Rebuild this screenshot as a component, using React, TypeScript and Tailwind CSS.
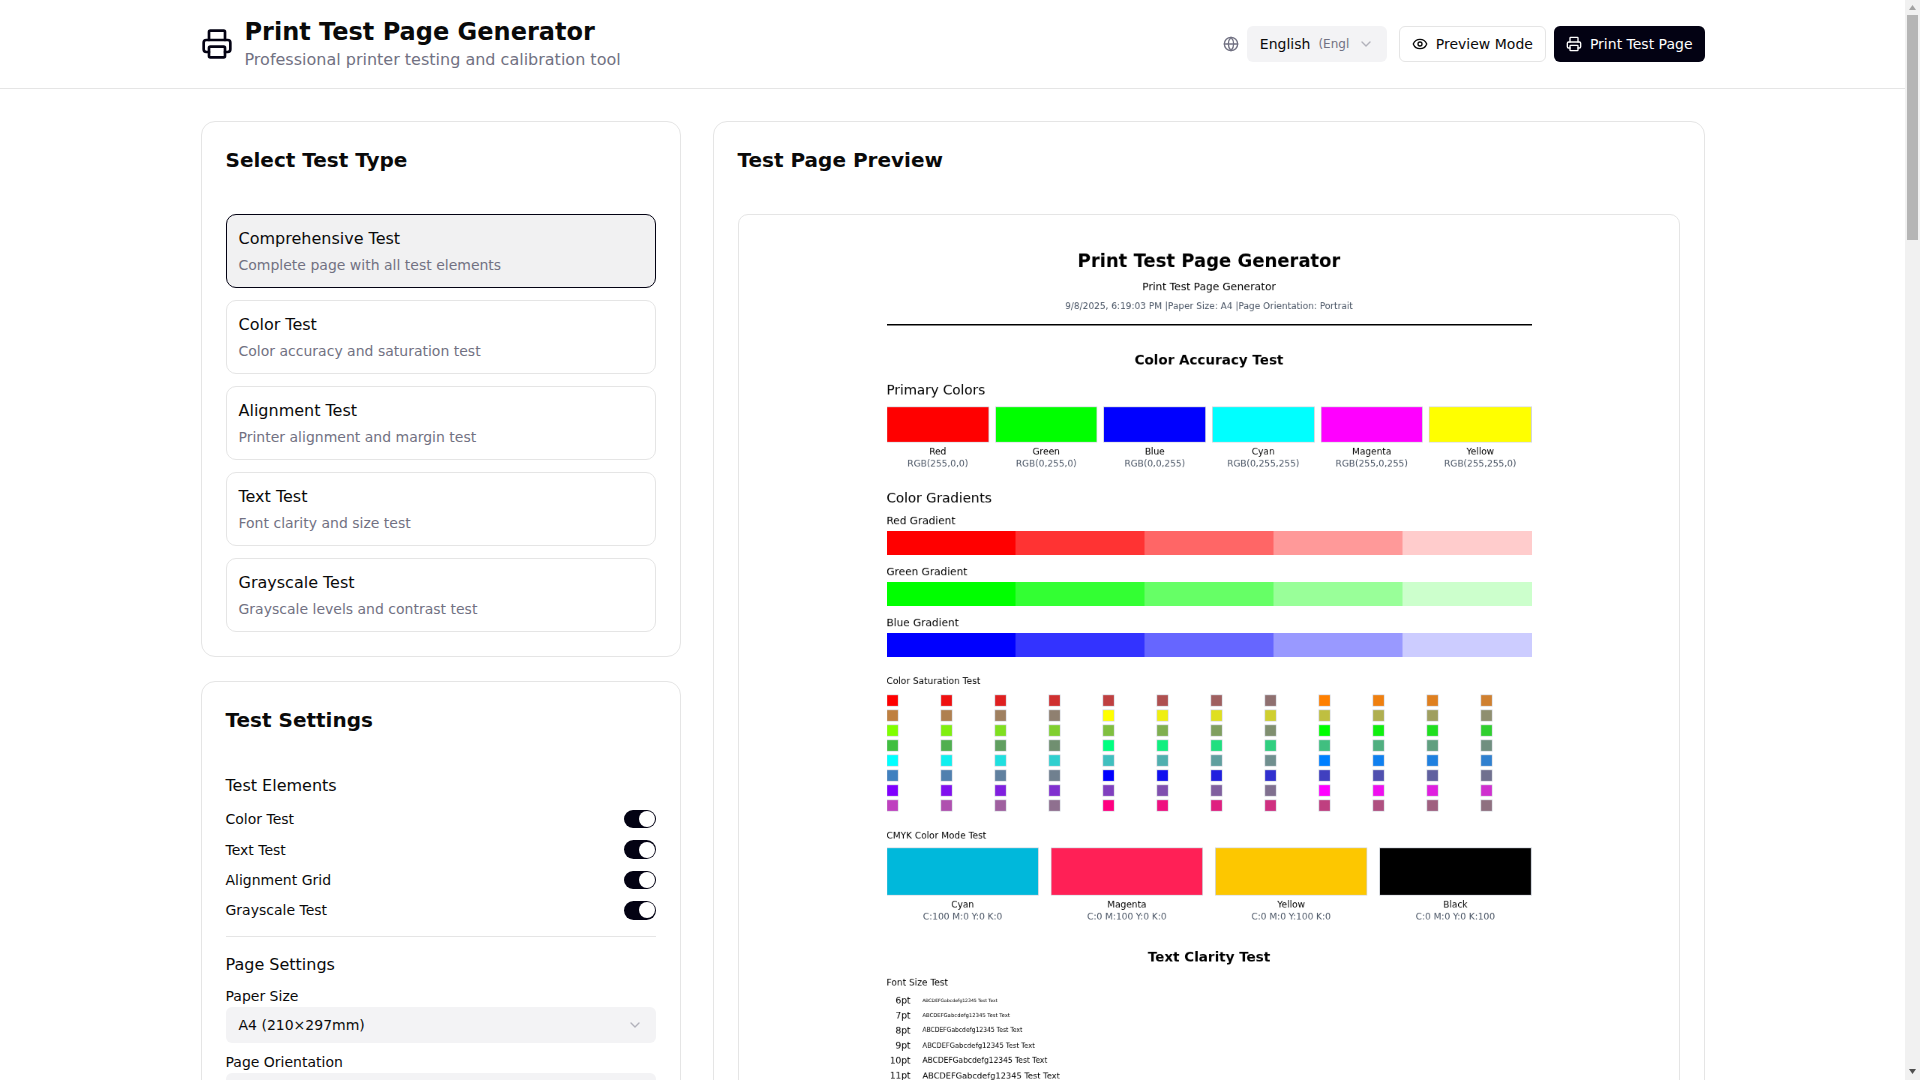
import { ChevronDown, Eye, Globe, Printer } from 'lucide-react';

const testTypes = [
  { name: 'Comprehensive Test', desc: 'Complete page with all test elements', active: true },
  { name: 'Color Test', desc: 'Color accuracy and saturation test' },
  { name: 'Alignment Test', desc: 'Printer alignment and margin test' },
  { name: 'Text Test', desc: 'Font clarity and size test' },
  { name: 'Grayscale Test', desc: 'Grayscale levels and contrast test' },
];

const primaries = [
  { name: 'Red', rgb: 'RGB(255,0,0)', cls: 'bg-[#ff0000]' },
  { name: 'Green', rgb: 'RGB(0,255,0)', cls: 'bg-[#00ff00]' },
  { name: 'Blue', rgb: 'RGB(0,0,255)', cls: 'bg-[#0000ff]' },
  { name: 'Cyan', rgb: 'RGB(0,255,255)', cls: 'bg-[#00ffff]' },
  { name: 'Magenta', rgb: 'RGB(255,0,255)', cls: 'bg-[#ff00ff]' },
  { name: 'Yellow', rgb: 'RGB(255,255,0)', cls: 'bg-[#ffff00]' },
];

const gradients = [
  { name: 'Red Gradient', cells: ['#ff0000', '#ff3333', '#ff6666', '#ff9999', '#ffcccc'] },
  { name: 'Green Gradient', cells: ['#00ff00', '#33ff33', '#66ff66', '#99ff99', '#ccffcc'] },
  { name: 'Blue Gradient', cells: ['#0000ff', '#3333ff', '#6666ff', '#9999ff', '#ccccff'] },
];

const cmyk = [
  { name: 'Cyan', values: 'C:100 M:0 Y:0 K:0', cls: 'bg-cyan-500' },
  { name: 'Magenta', values: 'C:0 M:100 Y:0 K:0', cls: 'bg-rose-500' },
  { name: 'Yellow', values: 'C:0 M:0 Y:100 K:0', cls: 'bg-yellow-400' },
  { name: 'Black', values: 'C:0 M:0 Y:0 K:100', cls: 'bg-black' },
];

const fontSizes = [
  { label: '6pt', cls: 'text-[6px]' },
  { label: '7pt', cls: 'text-[7px]' },
  { label: '8pt', cls: 'text-[8px]' },
  { label: '9pt', cls: 'text-[9px]' },
  { label: '10pt', cls: 'text-[10px]' },
  { label: '11pt', cls: 'text-[11px]' },
  { label: '12pt', cls: 'text-[12px]' },
  { label: '14pt', cls: 'text-[14px]' },
];

const hues = [0, 30, 60, 90, 120, 150, 180, 210, 240, 270, 300, 330];
const sats = [100, 87.5, 75, 62.5, 50, 37.5, 25, 12.5];

const Switch = () => (
  <span className="flex h-[18.4px] w-8 shrink-0 items-center rounded-full border border-transparent bg-[#030213]">
    <span className="ml-[14px] block h-4 w-4 rounded-full bg-white" />
  </span>
);

const Toggle = ({ label }: { label: string }) => (
  <div className="flex items-center justify-between">
    <span className="text-sm leading-none">{label}</span>
    <Switch />
  </div>
);

const SelectBox = ({ value }: { value: string }) => (
  <div className="mt-1 flex h-9 items-center justify-between rounded-md bg-[#f3f3f5] px-[13px] text-sm">
    <span>{value}</span>
    <ChevronDown className="h-4 w-4 text-[#717182] opacity-50" />
  </div>
);

const TestPage = () => (
  <div className="w-[860px] shrink-0 origin-top scale-[0.75] text-black will-change-transform">
    <div className="border-b-2 border-black pb-4 text-center">
      <h1 className="mb-2 text-2xl font-bold">Print Test Page Generator</h1>
      <p className="mb-2 text-sm">Print Test Page Generator</p>
      <p className="text-xs text-gray-600">9/8/2025, 6:19:03 PM |Paper Size: A4 |Page Orientation: Portrait</p>
    </div>

    <h2 className="mt-8 mb-3 text-center text-lg font-bold">Color Accuracy Test</h2>
    <h3 className="mb-2 text-lg">Primary Colors</h3>
    <div className="grid grid-cols-6 gap-2">
      {primaries.map((c) => (
        <div key={c.name} className="text-center">
          <div className={`h-12 border border-gray-300 ${c.cls}`} />
          <p className="mt-1 text-xs">{c.name}</p>
          <p className="text-xs text-gray-600">{c.rgb}</p>
        </div>
      ))}
    </div>

    <h3 className="mt-6 mb-1.5 text-lg">Color Gradients</h3>
    {gradients.map((g) => (
      <div key={g.name} className="mb-3">
        <p className="mb-1 text-sm">{g.name}</p>
        <div className="flex h-8">
          {g.cells.map((cell) => (
            <div key={cell} className="flex-1" style={{ backgroundColor: cell }} />
          ))}
        </div>
      </div>
    ))}

    <p className="mt-6 mb-2.5 text-xs">Color Saturation Test</p>
    <div className="grid grid-cols-12 gap-1">
      {hues.flatMap((h) =>
        sats.map((s) => (
          <div key={`${h}-${s}`} className="h-4 w-4 border border-gray-300" style={{ backgroundColor: `hsl(${h}, ${s}%, 50%)` }} />
        )),
      )}
    </div>

    <p className="mt-6 mb-2 text-xs">CMYK Color Mode Test</p>
    <div className="grid grid-cols-4 gap-4">
      {cmyk.map((c) => (
        <div key={c.name} className="text-center">
          <div className={`h-16 border border-gray-300 ${c.cls}`} />
          <p className="mt-1 text-xs">{c.name}</p>
          <p className="text-xs text-gray-600">{c.values}</p>
        </div>
      ))}
    </div>

    <h2 className="mt-8 mb-3 text-center text-lg font-bold">Text Clarity Test</h2>
    <p className="mb-2 text-xs">Font Size Test</p>
    <div className="flex flex-col gap-1">
      {fontSizes.map((f) => (
        <div key={f.label} className="flex h-4 items-center gap-4">
          <span className="w-8 text-right text-xs">{f.label}</span>
          <span className={`leading-none ${f.cls}`}>ABCDEFGabcdefg12345 Test Text</span>
        </div>
      ))}
    </div>
  </div>
);

// headless shots hide the native bar, so it is drawn over the page edge
const ScrollBar = () => (
  <div className="fixed top-0 right-0 flex h-screen w-[15px] flex-col items-center bg-[#f1f1f1]">
    <svg className="mt-[5px] mb-[5px] shrink-0" width="7" height="5" viewBox="0 0 7 5">
      <path d="M3.5 0 7 5H0z" fill="#a3a3a3" />
    </svg>
    <div className="h-[225px] w-[11px] shrink-0 bg-[#b5b5b5]" />
    <svg className="mt-auto mb-[6px] shrink-0" width="7" height="5" viewBox="0 0 7 5">
      <path d="M0 0h7L3.5 5z" fill="#505050" />
    </svg>
  </div>
);

export default function App() {
  return (
    <div className="min-h-[5040px] w-[1905px] bg-white font-['DejaVu_Sans',sans-serif] text-[#0a0a0a]">
      <header className="h-[89px] border-b border-[#e5e5e5]">
        <div className="mx-auto flex h-[88px] max-w-[1536px] items-center justify-between px-4">
          <div className="flex items-center gap-3">
            <Printer className="h-8 w-8 text-[#030213]" />
            <div>
              <h1 className="text-2xl leading-8 font-bold">Print Test Page Generator</h1>
              <p className="text-base text-[#717182]">Professional printer testing and calibration tool</p>
            </div>
          </div>
          <div className="flex items-center">
            <Globe className="mr-2 h-4 w-4 text-[#717182]" />
            <div className="mr-3 flex h-9 w-[140px] items-center gap-2 rounded-md bg-[#f3f3f5] px-[13px]">
              <div className="flex flex-1 items-center gap-2 overflow-hidden whitespace-nowrap">
                <span className="text-sm">English</span>
                <span className="text-xs text-[#717182]">(English)</span>
              </div>
              <ChevronDown className="h-4 w-4 shrink-0 text-[#717182] opacity-50" />
            </div>
            <button className="mr-2 flex h-9 items-center gap-2 rounded-md border border-[#e5e5e5] bg-white px-3 text-sm">
              <Eye className="h-4 w-4" />
              Preview Mode
            </button>
            <button className="flex h-9 items-center gap-2 rounded-md bg-[#030213] px-3 text-sm text-white">
              <Printer className="h-4 w-4" />
              Print Test Page
            </button>
          </div>
        </div>
      </header>

      <main className="mx-auto grid max-w-[1536px] grid-cols-3 gap-8 px-4 py-8">
        <div className="flex flex-col gap-6">
          <section className="rounded-[14px] border border-[#e5e5e5] p-6">
            <h2 className="mb-10 text-xl font-semibold">Select Test Type</h2>
            <div className="flex flex-col gap-3">
              {testTypes.map((t) => (
                <div
                  key={t.name}
                  className={`rounded-[10px] border px-3 py-3 ${t.active ? 'border-[#030213] bg-[#f1f1f2]' : 'border-[#e5e5e5]'}`}
                >
                  <div className="text-base">{t.name}</div>
                  <div className="mt-1 text-sm text-[#717182]">{t.desc}</div>
                </div>
              ))}
            </div>
          </section>

          <section className="rounded-[14px] border border-[#e5e5e5] p-6">
            <h2 className="mb-10 text-xl font-semibold">Test Settings</h2>
            <h3 className="mb-3 text-base">Test Elements</h3>
            <div className="flex flex-col gap-3">
              <Toggle label="Color Test" />
              <Toggle label="Text Test" />
              <Toggle label="Alignment Grid" />
              <Toggle label="Grayscale Test" />
            </div>
            <div className="my-4 h-px bg-[#e5e5e5]" />
            <h3 className="mb-3 text-base">Page Settings</h3>
            <label className="block text-sm leading-none">Paper Size</label>
            <SelectBox value="A4 (210×297mm)" />
            <label className="mt-3 block text-sm leading-none">Page Orientation</label>
            <SelectBox value="Portrait" />
          </section>
        </div>

        <section className="col-span-2 rounded-[14px] border border-[#e5e5e5] p-6">
          <h2 className="mb-10 text-xl font-semibold">Test Page Preview</h2>
          <div className="flex h-[4700px] justify-center overflow-hidden rounded-[10px] border border-[#e5e5e5] pt-[34px]">
            <TestPage />
          </div>
        </section>
      </main>
      <ScrollBar />
    </div>
  );
}
